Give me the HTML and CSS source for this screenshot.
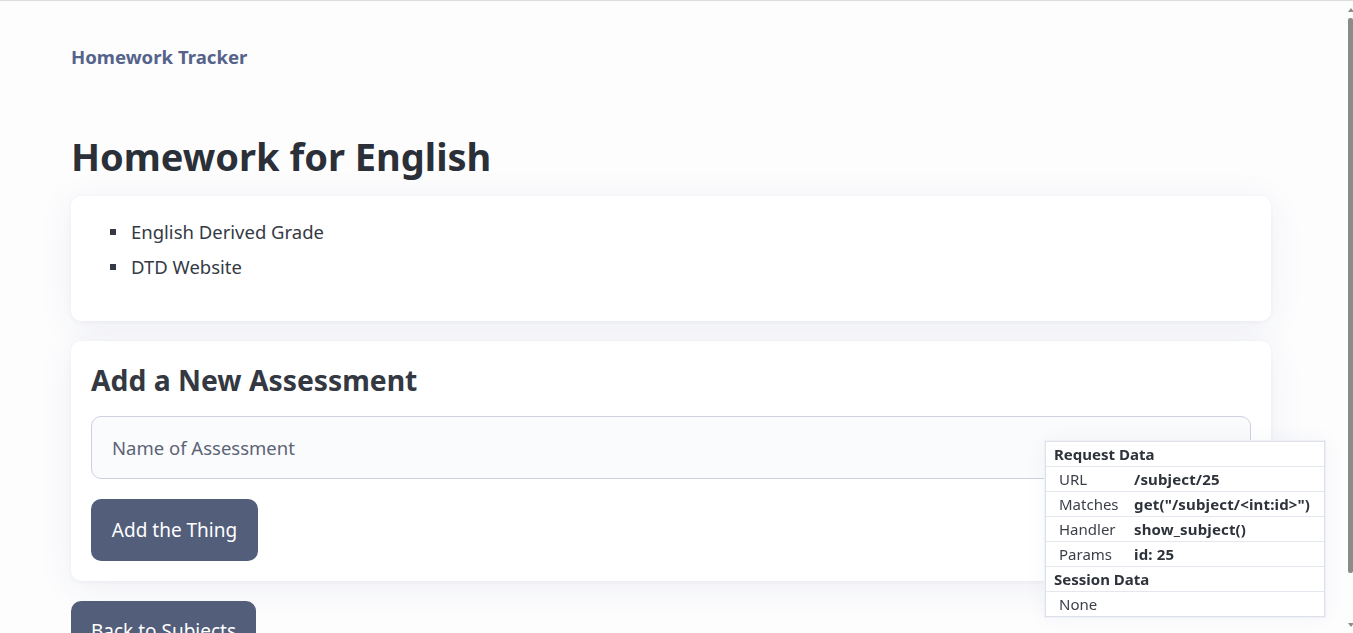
FILE: index.html
```html
<!DOCTYPE html>
<html lang="en">
<head>
<meta charset="utf-8">
<title>Homework for English</title>
<link rel="stylesheet" href="styles.css">
</head>
<body>
<div class="page">
  <nav class="nav"><a class="brand" href="#">Homework Tracker</a></nav>
  <h1 class="title">Homework for English</h1>
  <section class="card list-card">
    <ul class="items">
      <li>English Derived Grade</li>
      <li>DTD Website</li>
    </ul>
  </section>
  <section class="card form-card">
    <h2 class="form-title">Add a New Assessment</h2>
    <div class="field">Name of Assessment</div>
    <button class="btn">Add the Thing</button>
  </section>
  <button class="btn back">Back to Subjects</button>
</div>

<div class="debug">
  <div class="debug-head">Request Data</div>
  <div class="debug-row"><span class="k">URL</span><span class="v">/subject/25</span></div>
  <div class="debug-row"><span class="k">Matches</span><span class="v">get("/subject/&lt;int:id&gt;")</span></div>
  <div class="debug-row"><span class="k">Handler</span><span class="v">show_subject()</span></div>
  <div class="debug-row"><span class="k">Params</span><span class="v">id: 25</span></div>
  <div class="debug-head">Session Data</div>
  <div class="debug-row"><span class="k">None</span></div>
</div>

<div class="scrollbar">
  <div class="arrow up"></div>
  <div class="thumb"></div>
  <div class="arrow down"></div>
</div>
</body>
</html>
```

FILE: styles.css
```css
html, body {
  margin: 0;
  padding: 0;
  height: 100%;
  overflow: hidden;
}
body {
  background: #fdfdfe;
  font-family: "Noto Sans", "Open Sans", sans-serif;
  color: #2b3039;
  border-top: 1px solid #dedede;
  box-sizing: border-box;
}
.page {
  width: 1200px;
  padding: 44px 0 0 71px;
}
.nav {
  height: 24px;
  line-height: 24px;
}
.brand {
  font-size: 18.6px;
  font-weight: 700;
  color: #55638a;
  text-decoration: none;
}
.title {
  margin: 63px 0 16px;
  font-size: 38px;
  line-height: 48px;
  font-weight: 700;
  color: #2a2f38;
}
.card {
  background: #fff;
  border-radius: 10px;
  box-shadow: 0 1px 4px rgba(40, 50, 110, 0.05), 0 6px 36px rgba(40, 50, 110, 0.07);
  padding: 20px;
}
.list-card {
  padding: 18px 20px 20px;
}
.items {
  list-style: none;
  margin: 0 0 17px;
  padding: 0 0 0 19px;
}
.items li {
  display: flex;
  align-items: center;
  font-size: 18.5px;
  line-height: 35px;
  color: #343a45;
}
.items li::before {
  content: "";
  width: 6px;
  height: 6px;
  background: #343a45;
  margin-right: 15px;
  margin-top: 1px;
}
.form-card {
  margin-top: 20px;
}
.form-title {
  margin: 0 0 17px;
  font-size: 28.3px;
  line-height: 38px;
  font-weight: 700;
  color: #343842;
}
.field {
  height: 61px;
  border: 1px solid #cdd1e2;
  border-radius: 10px;
  background: #fafbfc;
  padding: 0 20px;
  display: flex;
  align-items: center;
  font-size: 18.5px;
  color: #5c6476;
}
.btn {
  display: block;
  margin-top: 20px;
  height: 62px;
  width: 167px;
  padding: 0;
  text-align: center;
  background: #525e7a;
  color: #fff;
  border: none;
  border-radius: 10px;
  font-family: inherit;
  font-size: 19px;
}
.back {
  width: 185px;
  padding-bottom: 2px;
}
.debug {
  position: fixed;
  left: 1045px;
  top: 441px;
  width: 278px;
  background: #fff;
  border: 1px solid #dfe1ea;
  font-size: 15px;
  color: #2e323a;
  box-shadow: 0 0 0 1px #eef0f5, 0 0 20px rgba(40, 50, 110, 0.05);
}
.debug-head {
  height: 24px;
  line-height: 24px;
  padding-left: 8px;
  font-weight: 700;
  border-bottom: 1px solid #e6e7ee;
}
.debug-row {
  height: 24px;
  line-height: 24px;
  display: flex;
  padding-left: 13px;
  border-bottom: 1px solid #e6e7ee;
}
.debug-row:last-child {
  border-bottom: none;
}
.debug-row .k {
  width: 75px;
  color: #3a3f48;
}
.debug-row .v {
  font-weight: 700;
  white-space: nowrap;
  letter-spacing: 0.15px;
}
.scrollbar {
  position: fixed;
  top: 1px;
  right: 0;
  width: 5px;
  height: 632px;
  display: flex;
  flex-direction: column;
  align-items: center;
}
.thumb {
  width: 5px;
  flex: 1;
  background: #8b8b8b;
  border-radius: 2px;
  margin: 6px 0 50px;
}
.arrow {
  width: 0;
  height: 0;
  border-left: 3px solid transparent;
  border-right: 3px solid transparent;
}
.arrow.up {
  margin-top: 7px;
  border-bottom: 4px solid #8b8b8b;
}
.arrow.down {
  margin-bottom: 6px;
  border-top: 4px solid #8b8b8b;
}
```
